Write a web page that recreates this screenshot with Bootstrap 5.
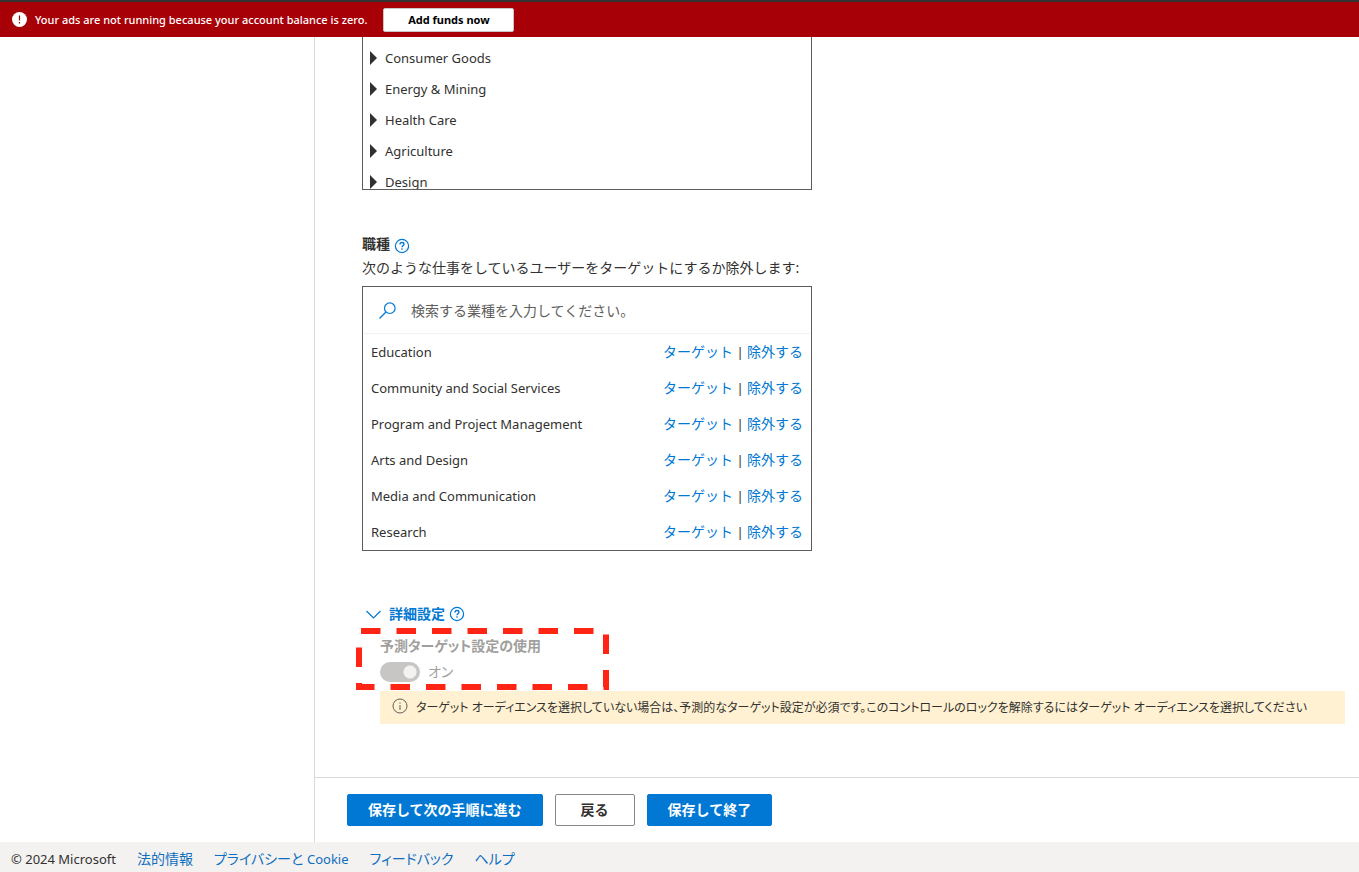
<!DOCTYPE html>
<html lang="ja">
<head>
<meta charset="utf-8">
<meta name="viewport" content="width=device-width, initial-scale=1">
<title>Microsoft Advertising</title>
<link href="https://cdn.jsdelivr.net/npm/bootstrap@5.3.0/dist/css/bootstrap.min.css" rel="stylesheet">
<style>
  :root { --ms-blue: #0078d4; --ms-ink: #323130; --ms-line: #d9d9d9; --ms-box: #5c5c5c; }
  body { font-family: "Noto Sans", "Noto Sans CJK JP", sans-serif; font-size: 14px; line-height: 20px; color: var(--ms-ink); background: #fff; }
  a { color: var(--ms-blue); text-decoration: none; }
  svg { display: block; flex: none; }
  .latin { font-size: 13px; }
  .tight-kana { font-feature-settings: "palt"; }
  .funds-bar { border-top: 2px solid #333; background: #a80007; color: #fff; font-size: 11px; font-weight: 500; min-height: 37px; padding-left: 12px; }
  .funds-btn { width: 131px; height: 24px; padding: 0; font-size: 11px; line-height: 20px; font-weight: 700; background: #fff; color: #000; border: 1px solid #c8c6c4; border-radius: 2px; }
  .side-pane { flex: 0 0 315px; border-right: 1px solid var(--ms-line); }
  .form-scroll { padding: 0 14px 0 47px; overflow: hidden; }
  .picker { max-width: 450px; border: 1px solid var(--ms-box); }
  .industry-tree { border-top: 0; height: 153px; overflow: hidden; padding-top: 5px; }
  .tree-row { height: 31px; padding: 0 0 0 7px; gap: 8px; border: 0; background: none; color: inherit; width: 100%; font-size: 13px; }
  .section-title { font-size: 14px; font-weight: 700; line-height: 20px; margin: 0; }
  .job-section { margin-top: 44px; }
  .search-row { height: 47px; padding-left: 15px; gap: 15px; border-bottom: 1px solid #f3f2f1; margin: 0 1px; }
  .search-row input { border: 0; outline: 0; padding: 0; color: inherit; height: 28px; }
  .search-row input::placeholder { color: #605e5c; opacity: 1; }
  .job-row { height: 36px; padding: 0 8px; }
  .advanced { margin-top: 53px; }
  .advanced-toggle { border: 0; background: none; padding: 0 0 0 4px; gap: 8px; color: var(--ms-blue); font-weight: 700; }
  .help-btn { border: 0; background: none; padding: 0; }
  .advanced-body { margin-left: 18px; }
  .predictive { position: relative; color: #a19f9d; padding: 12px 0 9px; }
  .predictive .switch-row { margin-top: 6px; gap: 8px; height: 20px; }
  .predictive .form-check-input { width: 40px; height: 20px; margin: 0; opacity: 1; background-color: #c8c6c4; border: 0; appearance: none; border-radius: 10px; background-image: radial-gradient(circle, #f3f2f1 6px, transparent 7px); background-size: 20px 20px; background-position: right center; background-repeat: no-repeat; }
  .predictive label { opacity: 1; }
  .callout-dashes { position: absolute; left: -24px; top: 4px; }
  .notice { background: #fff1d2; min-height: 33px; padding: 7px 12px 6px; gap: 8px; font-size: 12px; }
  .action-bar { border-top: 1px solid var(--ms-line); padding: 16px 32px; gap: 12px; }
  .action-bar .btn { height: 32px; padding: 0 20px; font-size: 14px; line-height: 20px; font-weight: 700; border-radius: 2px; --bs-btn-border-color: #0078d4; --bs-btn-bg: #0078d4; --bs-btn-color: #fff; }
  .action-bar .btn-back { --bs-btn-border-color: #8a8886; --bs-btn-bg: #fff; --bs-btn-color: #323130; padding: 0 25px; }
  .page-foot { background: #f3f2f1; min-height: 30px; padding: 4px 11px 0; gap: 21px; }
  .page-foot a { color: #106ebe; }
</style>
</head>
<body>
<div class="d-flex flex-column vh-100">
  <div class="funds-bar d-flex align-items-center flex-shrink-0" role="alert">
    <svg width="15" height="15" viewBox="0 0 15 15"><circle cx="7.500" cy="7.500" r="7.500" fill="#fff"/><path d="M7.500 3.500v5M7.500 10v1.500" stroke="#a80007" stroke-width="1.200"/></svg>
    <span class="ms-2">Your ads are not running because your account balance is zero.</span>
    <button type="button" class="funds-btn ms-3">Add funds now</button>
  </div>

  <div class="d-flex flex-grow-1 overflow-hidden">
    <aside class="side-pane"></aside>
    <main class="d-flex flex-column flex-grow-1 overflow-hidden">
      <div class="form-scroll flex-grow-1">
        <ul class="picker industry-tree list-unstyled m-0">
          <li><button type="button" class="tree-row d-flex align-items-center"><svg width="7" height="14"><path d="M0 0L7 7L0 14Z" fill="#323130"/></svg>Consumer Goods</button></li>
          <li><button type="button" class="tree-row d-flex align-items-center"><svg width="7" height="14"><path d="M0 0L7 7L0 14Z" fill="#323130"/></svg>Energy &amp; Mining</button></li>
          <li><button type="button" class="tree-row d-flex align-items-center"><svg width="7" height="14"><path d="M0 0L7 7L0 14Z" fill="#323130"/></svg>Health Care</button></li>
          <li><button type="button" class="tree-row d-flex align-items-center"><svg width="7" height="14"><path d="M0 0L7 7L0 14Z" fill="#323130"/></svg>Agriculture</button></li>
          <li><button type="button" class="tree-row d-flex align-items-center"><svg width="7" height="14"><path d="M0 0L7 7L0 14Z" fill="#323130"/></svg>Design</button></li>
        </ul>

        <section class="job-section">
          <div class="d-flex align-items-center mb-1">
            <h2 class="section-title">職種</h2>
            <button type="button" class="help-btn ms-1 mt-1" aria-label="職種のヘルプ"><svg width="16" height="16" viewBox="0 0 16 16" fill="none" stroke="#0078d4"><circle cx="8" cy="8" r="6.600" stroke-width="1.200"/><path d="M6 6.500C6 5.200 6.800 4.500 8 4.500S10 5.300 10 6.300C10 7.700 8 7.600 8 9.300M8 10.300v1.400" stroke-width="1.300"/></svg></button>
          </div>
          <label for="jobSearch" class="d-block">次のような仕事をしているユーザーをターゲットにするか除外します:</label>
          <div class="picker mt-2">
            <div class="search-row d-flex align-items-center">
              <svg width="17" height="17" viewBox="0 0 17 17" fill="none" stroke="#0078d4" stroke-width="1.200"><circle cx="10.800" cy="6.200" r="5.300"/><path d="M7 10L0.500 16.500"/></svg>
              <input id="jobSearch" type="text" class="flex-grow-1" placeholder="検索する業種を入力してください。">
            </div>
            <ul class="list-unstyled m-0">
              <li class="job-row d-flex align-items-center justify-content-between"><span class="latin">Education</span><span><a href="#">ターゲット</a><span class="latin"> | </span><a href="#">除外する</a></span></li>
              <li class="job-row d-flex align-items-center justify-content-between"><span class="latin">Community and Social Services</span><span><a href="#">ターゲット</a><span class="latin"> | </span><a href="#">除外する</a></span></li>
              <li class="job-row d-flex align-items-center justify-content-between"><span class="latin">Program and Project Management</span><span><a href="#">ターゲット</a><span class="latin"> | </span><a href="#">除外する</a></span></li>
              <li class="job-row d-flex align-items-center justify-content-between"><span class="latin">Arts and Design</span><span><a href="#">ターゲット</a><span class="latin"> | </span><a href="#">除外する</a></span></li>
              <li class="job-row d-flex align-items-center justify-content-between"><span class="latin">Media and Communication</span><span><a href="#">ターゲット</a><span class="latin"> | </span><a href="#">除外する</a></span></li>
              <li class="job-row d-flex align-items-center justify-content-between"><span class="latin">Research</span><span><a href="#">ターゲット</a><span class="latin"> | </span><a href="#">除外する</a></span></li>
            </ul>
          </div>
        </section>

        <section class="advanced">
          <div class="d-flex align-items-center">
            <button type="button" class="advanced-toggle d-flex align-items-center" aria-expanded="true"><svg width="15" height="9" viewBox="0 0 15 9" fill="none" stroke="#0078d4" stroke-width="1.200"><path d="M0.500 1L7.500 8L14.500 1"/></svg>詳細設定</button>
            <button type="button" class="help-btn ms-1" aria-label="詳細設定のヘルプ"><svg width="16" height="16" viewBox="0 0 16 16" fill="none" stroke="#0078d4"><circle cx="8" cy="8" r="6.600" stroke-width="1.200"/><path d="M6 6.500C6 5.200 6.800 4.500 8 4.500S10 5.300 10 6.300C10 7.700 8 7.600 8 9.300M8 10.300v1.400" stroke-width="1.300"/></svg></button>
          </div>
          <div class="advanced-body">
            <div class="predictive tight-kana">
              <h3 class="section-title">予測ターゲット設定の使用</h3>
              <div class="switch-row d-flex align-items-center">
                <input class="form-check-input" type="checkbox" role="switch" id="predictiveSwitch" checked disabled>
                <label for="predictiveSwitch">オン</label>
              </div>
              <svg class="callout-dashes" width="254" height="62" viewBox="0 0 254 62" aria-hidden="true"><path d="M5 3H250V59H3V5" fill="none" stroke="#ff2413" stroke-width="6" stroke-dasharray="19.500 16"/></svg>
            </div>
            <div class="notice tight-kana d-flex">
              <svg width="16" height="16" viewBox="0 0 16 16" fill="none" stroke="#605e5c"><circle cx="8" cy="8" r="7"/><path d="M8 7v5M8 4.500v1.200"/></svg>
              <span>ターゲット オーディエンスを選択していない場合は、予測的なターゲット設定が必須です。このコントロールのロックを解除するにはターゲット オーディエンスを選択してください</span>
            </div>
          </div>
        </section>
      </div>
      <div class="action-bar d-flex flex-shrink-0">
        <button type="button" class="btn">保存して次の手順に進む</button>
        <button type="button" class="btn btn-back">戻る</button>
        <button type="button" class="btn">保存して終了</button>
      </div>
    </main>
  </div>

  <footer class="page-foot tight-kana d-flex align-items-center flex-shrink-0">
    <span class="latin">© 2024 Microsoft</span>
    <a href="#">法的情報</a>
    <a href="#">プライバシーと <span class="latin">Cookie</span></a>
    <a href="#">フィードバック</a>
    <a href="#">ヘルプ</a>
  </footer>
</div>
<script src="https://cdn.jsdelivr.net/npm/bootstrap@5.3.0/dist/js/bootstrap.bundle.min.js"></script>
</body>
</html>
